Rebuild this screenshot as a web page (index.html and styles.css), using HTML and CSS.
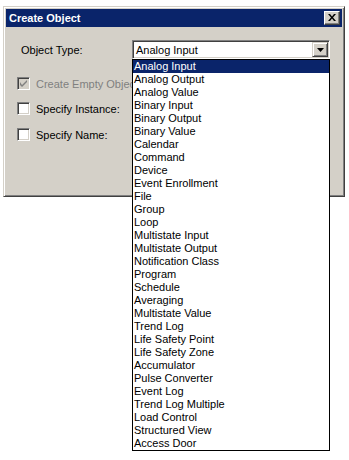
FILE: index.html
```html
<!DOCTYPE html>
<html lang="en">
<head>
    <meta charset="UTF-8">
    <title>Create Object</title>
    <link rel="stylesheet" href="styles.css">
</head>
<body>
    <div class="dialog">
        <div class="title-bar">
            <span class="title-text">Create Object</span>
            <button class="close-btn">
                <svg width="8" height="7" viewBox="0 0 8 7">
                    <path d="M0 0 L2 0 L4 2.5 L6 0 L8 0 L5 3.5 L8 7 L6 7 L4 4.5 L2 7 L0 7 L3 3.5 Z" fill="#000"/>
                </svg>
            </button>
        </div>
        <div class="dialog-body">
            <div class="field-row">
                <label class="field-label">Object Type:</label>
                <div class="combo">
                    <div class="combo-box">
                        <span class="combo-value">Analog Input</span>
                        <span class="combo-arrow">
                            <svg width="7" height="4" viewBox="0 0 7 4"><path d="M0 0 H7 L3.5 4 Z" fill="#000"/></svg>
                        </span>
                    </div>
                    <ul class="combo-list">
                        <li class="selected">Analog Input</li>
                        <li>Analog Output</li>
                        <li>Analog Value</li>
                        <li>Binary Input</li>
                        <li>Binary Output</li>
                        <li>Binary Value</li>
                        <li>Calendar</li>
                        <li>Command</li>
                        <li>Device</li>
                        <li>Event Enrollment</li>
                        <li>File</li>
                        <li>Group</li>
                        <li>Loop</li>
                        <li>Multistate Input</li>
                        <li>Multistate Output</li>
                        <li>Notification Class</li>
                        <li>Program</li>
                        <li>Schedule</li>
                        <li>Averaging</li>
                        <li>Multistate Value</li>
                        <li>Trend Log</li>
                        <li>Life Safety Point</li>
                        <li>Life Safety Zone</li>
                        <li>Accumulator</li>
                        <li>Pulse Converter</li>
                        <li>Event Log</li>
                        <li>Trend Log Multiple</li>
                        <li>Load Control</li>
                        <li>Structured View</li>
                        <li>Access Door</li>
                    </ul>
                </div>
            </div>
            <div class="check-row disabled">
                <span class="checkbox checked">
                    <svg width="7" height="7" viewBox="0 0 7 7"><path d="M0 2 L0 5 L2 7 L7 2 L7 0 L2 5 Z" fill="#808080"/></svg>
                </span>
                <span class="check-label">Create Empty Object</span>
            </div>
            <div class="check-row">
                <span class="checkbox"></span>
                <span class="check-label">Specify Instance:</span>
            </div>
            <div class="check-row">
                <span class="checkbox"></span>
                <span class="check-label">Specify Name:</span>
            </div>
        </div>
    </div>
</body>
</html>
```

FILE: styles.css
```css
/* global */
* {
    margin: 0;
    padding: 0;
    box-sizing: border-box;
}

html,
body {
    height: 100%;
}

body {
    background: #fff;
    font-family: "Liberation Sans", Arial, sans-serif;
    font-size: 11px;
    color: #000;
    min-height: 460px;
}

/* dialog frame */
.dialog {
    margin: 6px 0 0 3px;
    width: 342px;
    height: 191px;
    background: #d4d0c8;
    border: 1px solid;
    border-color: #d4d0c8 #404040 #404040 #d4d0c8;
    box-shadow: inset 1px 1px 0 #fff, inset -1px -1px 0 #808080;
    padding: 2px;
}

.title-bar {
    height: 18px;
    background: #0a246a;
    display: flex;
    align-items: center;
    justify-content: space-between;
    padding: 0 2px 0 3px;
}

.title-text {
    color: #fff;
    font-weight: bold;
    font-size: 11px;
}

.close-btn {
    width: 16px;
    height: 14px;
    background: #d4d0c8;
    border: 1px solid;
    border-color: #fff #404040 #404040 #fff;
    box-shadow: inset -1px -1px 0 #808080;
    display: flex;
    align-items: center;
    justify-content: center;
    padding-bottom: 1px;
}

/* form */
.dialog-body {
    padding: 13px 0 0 0;
}

.field-row {
    display: flex;
    align-items: center;
    height: 19px;
    padding-left: 15px;
}

.field-label {
    width: 111px;
}

.combo {
    position: relative;
}

.combo-box {
    width: 198px;
    height: 19px;
    background: #fff;
    border: 1px solid;
    border-color: #808080 #fff #fff #808080;
    box-shadow: inset 1px 1px 0 #404040, inset -1px -1px 0 #d4d0c8;
    display: flex;
    align-items: center;
    justify-content: space-between;
    padding: 0 1px 0 3px;
}

.combo-arrow {
    width: 16px;
    height: 15px;
    background: #d4d0c8;
    border: 1px solid;
    border-color: #d4d0c8 #404040 #404040 #d4d0c8;
    box-shadow: inset 1px 1px 0 #fff, inset -1px -1px 0 #808080;
    display: flex;
    align-items: center;
    justify-content: center;
}

/* open dropdown */
.combo-list {
    position: absolute;
    top: 19px;
    left: 0;
    width: 198px;
    list-style: none;
    background: #fff;
    border: 1px solid #000;
    z-index: 2;
}

.combo-list li {
    height: 13px;
    line-height: 13px;
    padding-left: 1px;
    white-space: nowrap;
}

.combo-list li.selected {
    background: #0a246a;
    color: #fff;
}

/* checkboxes */
.check-row {
    display: flex;
    align-items: center;
    gap: 6px;
    padding-left: 11px;
    height: 13px;
    margin-top: 18px;
}

.check-row + .check-row {
    margin-top: 12px;
}

.check-row:last-child {
    margin-top: 13px;
}

.checkbox {
    width: 13px;
    height: 13px;
    background: #fff;
    border: 1px solid;
    border-color: #808080 #fff #fff #808080;
    box-shadow: inset 1px 1px 0 #404040, inset -1px -1px 0 #d4d0c8;
    display: flex;
    align-items: center;
    justify-content: center;
}

.check-row.disabled .checkbox {
    background: #d4d0c8;
}

.check-row.disabled .check-label {
    color: #808080;
}
```
